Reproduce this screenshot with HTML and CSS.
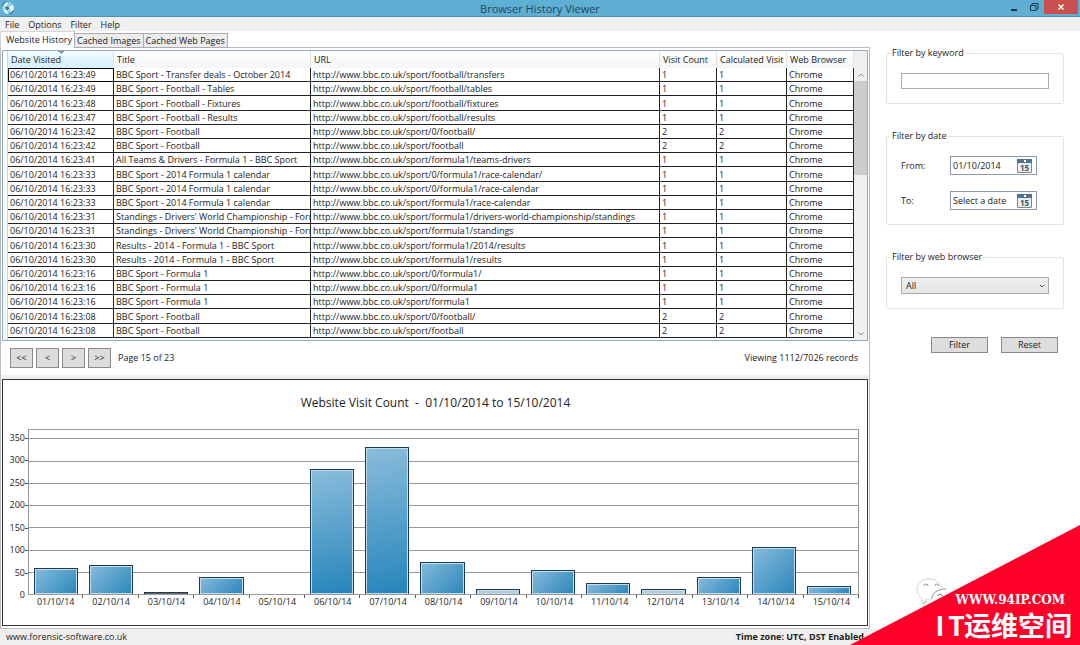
FILE: index.html
```
<!DOCTYPE html>
<html lang="en">
<head>
  <meta charset="UTF-8">
  <meta name="viewport" content="width=device-width, initial-scale=1.0">
  <title>Browser History Viewer</title>
  <link rel="stylesheet" href="styles.css">
</head>
<body>
  <header class="titlebar">
    <svg class="app-icon" viewBox="0 0 14 14">
      <circle cx="7" cy="7" r="6" fill="#8fd0ee"/>
      <path d="M3 3l3-2 1 2-2 2-2 1zM8 6l4-2 1 4-2 3-2-2zM3 8l3 1 1 4-3-1z" fill="#e8f6fc"/>
      <path d="M1 5a6 6 0 0 1 4-4M13 9a6 6 0 0 1-5 4M5 6l3 1-2 2z" stroke="#38627a" fill="#38627a" fill-opacity=".5"/>
    </svg>
    <h1>Browser History Viewer</h1>
    <div class="window-buttons">
      <button class="win-btn" aria-label="Minimize"><svg viewBox="0 0 10 10"><path d="M2 8h6" stroke="#17384c" stroke-width="2"/></svg></button>
      <button class="win-btn" aria-label="Restore"><svg viewBox="0 0 10 10"><path d="M3 3V1.500h6V7H7.500M1.500 3.500h5.500v5H1.500z" stroke="#17384c" fill="none"/></svg></button>
      <button class="win-btn close" aria-label="Close"><svg viewBox="0 0 10 10"><path d="M2.500 2.500l5 5M7.500 2.500l-5 5" stroke="#fff" stroke-width="1.500"/></svg></button>
    </div>
  </header>

  <nav class="menu">
    <a href="#">File</a>
    <a href="#">Options</a>
    <a href="#">Filter</a>
    <a href="#">Help</a>
  </nav>

  <main class="main">
    <section class="left">
      <div class="tabs">
        <button class="tab active">Website History</button>
        <button class="tab">Cached Images</button>
        <button class="tab">Cached Web Pages</button>
      </div>

      <div class="tab-page">
        <div class="grid">
          <div class="row-header"></div>
          <table>
            <colgroup>
              <col class="col-date"><col class="col-title"><col><col class="col-count"><col class="col-calc"><col class="col-browser">
            </colgroup>
            <thead>
              <tr><th class="sorted">Date Visited</th><th>Title</th><th>URL</th><th>Visit Count</th><th>Calculated Visit</th><th>Web Browser</th></tr>
            </thead>
            <tbody>
              <tr><td class="current">06/10/2014 16:23:49</td><td>BBC Sport - Transfer deals - October 2014</td><td>http://www.bbc.co.uk/sport/football/transfers</td><td>1</td><td>1</td><td>Chrome</td></tr>
              <tr><td>06/10/2014 16:23:49</td><td>BBC Sport - Football - Tables</td><td>http://www.bbc.co.uk/sport/football/tables</td><td>1</td><td>1</td><td>Chrome</td></tr>
              <tr><td>06/10/2014 16:23:48</td><td>BBC Sport - Football - Fixtures</td><td>http://www.bbc.co.uk/sport/football/fixtures</td><td>1</td><td>1</td><td>Chrome</td></tr>
              <tr><td>06/10/2014 16:23:47</td><td>BBC Sport - Football - Results</td><td>http://www.bbc.co.uk/sport/football/results</td><td>1</td><td>1</td><td>Chrome</td></tr>
              <tr><td>06/10/2014 16:23:42</td><td>BBC Sport - Football</td><td>http://www.bbc.co.uk/sport/0/football/</td><td>2</td><td>2</td><td>Chrome</td></tr>
              <tr><td>06/10/2014 16:23:42</td><td>BBC Sport - Football</td><td>http://www.bbc.co.uk/sport/football</td><td>2</td><td>2</td><td>Chrome</td></tr>
              <tr><td>06/10/2014 16:23:41</td><td>All Teams &amp; Drivers - Formula 1 - BBC Sport</td><td>http://www.bbc.co.uk/sport/formula1/teams-drivers</td><td>1</td><td>1</td><td>Chrome</td></tr>
              <tr><td>06/10/2014 16:23:33</td><td>BBC Sport - 2014 Formula 1 calendar</td><td>http://www.bbc.co.uk/sport/0/formula1/race-calendar/</td><td>1</td><td>1</td><td>Chrome</td></tr>
              <tr><td>06/10/2014 16:23:33</td><td>BBC Sport - 2014 Formula 1 calendar</td><td>http://www.bbc.co.uk/sport/0/formula1/race-calendar</td><td>1</td><td>1</td><td>Chrome</td></tr>
              <tr><td>06/10/2014 16:23:33</td><td>BBC Sport - 2014 Formula 1 calendar</td><td>http://www.bbc.co.uk/sport/formula1/race-calendar</td><td>1</td><td>1</td><td>Chrome</td></tr>
              <tr><td>06/10/2014 16:23:31</td><td>Standings - Drivers' World Championship - Form</td><td>http://www.bbc.co.uk/sport/formula1/drivers-world-championship/standings</td><td>1</td><td>1</td><td>Chrome</td></tr>
              <tr><td>06/10/2014 16:23:31</td><td>Standings - Drivers' World Championship - Form</td><td>http://www.bbc.co.uk/sport/formula1/standings</td><td>1</td><td>1</td><td>Chrome</td></tr>
              <tr><td>06/10/2014 16:23:30</td><td>Results - 2014 - Formula 1 - BBC Sport</td><td>http://www.bbc.co.uk/sport/formula1/2014/results</td><td>1</td><td>1</td><td>Chrome</td></tr>
              <tr><td>06/10/2014 16:23:30</td><td>Results - 2014 - Formula 1 - BBC Sport</td><td>http://www.bbc.co.uk/sport/formula1/results</td><td>1</td><td>1</td><td>Chrome</td></tr>
              <tr><td>06/10/2014 16:23:16</td><td>BBC Sport - Formula 1</td><td>http://www.bbc.co.uk/sport/0/formula1/</td><td>1</td><td>1</td><td>Chrome</td></tr>
              <tr><td>06/10/2014 16:23:16</td><td>BBC Sport - Formula 1</td><td>http://www.bbc.co.uk/sport/0/formula1</td><td>1</td><td>1</td><td>Chrome</td></tr>
              <tr><td>06/10/2014 16:23:16</td><td>BBC Sport - Formula 1</td><td>http://www.bbc.co.uk/sport/formula1</td><td>1</td><td>1</td><td>Chrome</td></tr>
              <tr><td>06/10/2014 16:23:08</td><td>BBC Sport - Football</td><td>http://www.bbc.co.uk/sport/0/football/</td><td>2</td><td>2</td><td>Chrome</td></tr>
              <tr><td>06/10/2014 16:23:08</td><td>BBC Sport - Football</td><td>http://www.bbc.co.uk/sport/football</td><td>2</td><td>2</td><td>Chrome</td></tr>
            </tbody>
          </table>
          <div class="scrollbar">
            <svg class="arrow" viewBox="0 0 8 6"><path d="M1.500 4.500L4 2l2.500 2.500" fill="none" stroke="#8a8a8a"/></svg>
            <div class="thumb"></div>
            <svg class="arrow" viewBox="0 0 8 6"><path d="M1.500 1.500L4 4l2.500-2.500" fill="none" stroke="#8a8a8a"/></svg>
          </div>
        </div>

        <div class="pager">
          <button>&lt;&lt;</button>
          <button>&lt;</button>
          <button>&gt;</button>
          <button>&gt;&gt;</button>
          <span>Page 15 of 23</span>
          <span class="records">Viewing 1112/7026 records</span>
        </div>

        <div class="splitter"></div>

        <div class="chart">
          <h2>Website Visit Count &nbsp;-&nbsp; 01/10/2014 to 15/10/2014</h2>
          <div class="chart-body">
            <div class="y-axis">
              <i class="top"></i>
              <div><span>350</span></div>
              <div><span>300</span></div>
              <div><span>250</span></div>
              <div><span>200</span></div>
              <div><span>150</span></div>
              <div><span>100</span></div>
              <div><span>50</span></div>
              <b>0</b>
            </div>
            <div class="plot">
              <div class="lines"><i class="top"></i><i></i><i></i><i></i><i></i><i></i><i></i><i></i></div>
              <div class="bars">
                <div><span class="bar" style="height: 15.7%"></span></div>
                <div><span class="bar" style="height: 17.8%"></span></div>
                <div><span class="bar thin" style="height: 1.2%"></span></div>
                <div><span class="bar" style="height: 10.3%"></span></div>
                <div></div>
                <div><span class="bar tall" style="height: 76.2%"></span></div>
                <div><span class="bar tall" style="height: 89.5%"></span></div>
                <div><span class="bar" style="height: 19.7%"></span></div>
                <div><span class="bar pale" style="height: 3%"></span></div>
                <div><span class="bar" style="height: 14.6%"></span></div>
                <div><span class="bar" style="height: 7%"></span></div>
                <div><span class="bar pale" style="height: 3.3%"></span></div>
                <div><span class="bar" style="height: 10.6%"></span></div>
                <div><span class="bar" style="height: 28.8%"></span></div>
                <div><span class="bar" style="height: 5%"></span></div>
              </div>
            </div>
            <div class="x-axis">
              <span>01/10/14</span><span>02/10/14</span><span>03/10/14</span><span>04/10/14</span><span>05/10/14</span><span>06/10/14</span><span>07/10/14</span><span>08/10/14</span><span>09/10/14</span><span>10/10/14</span><span>11/10/14</span><span>12/10/14</span><span>13/10/14</span><span>14/10/14</span><span>15/10/14</span>
            </div>
          </div>
        </div>
      </div>
    </section>

    <form class="filters">
      <fieldset>
        <legend><label for="keyword">Filter by keyword</label></legend>
        <input class="keyword" id="keyword" type="text">
      </fieldset>

      <fieldset>
        <legend>Filter by date</legend>
        <div class="date-row">
          <label for="from">From:</label>
          <div class="date-box">
            <input id="from" type="text" value="01/10/2014">
            <button type="button" aria-label="Choose start date"><svg viewBox="0 0 15 14"><path d="M.5.5h14v13H.5z" fill="#e9eef2" stroke="#7d8a96"/><path d="M0 0h15v4H0z" fill="#4d7391"/><path d="M7 1h2v2H7z" fill="#fff"/><text x="7.500" y="12" text-anchor="middle">15</text></svg></button>
          </div>
        </div>
        <div class="date-row">
          <label for="to">To:</label>
          <div class="date-box">
            <input id="to" type="text" value="Select a date">
            <button type="button" aria-label="Choose end date"><svg viewBox="0 0 15 14"><path d="M.5.5h14v13H.5z" fill="#e9eef2" stroke="#7d8a96"/><path d="M0 0h15v4H0z" fill="#4d7391"/><path d="M7 1h2v2H7z" fill="#fff"/><text x="7.500" y="12" text-anchor="middle">15</text></svg></button>
          </div>
        </div>
      </fieldset>

      <fieldset>
        <legend><label for="browser">Filter by web browser</label></legend>
        <div class="select-box">
          <select id="browser"><option>All</option></select>
          <svg class="arrow" viewBox="0 0 8 6"><path d="M2 2l2 2 2-2" fill="none" stroke="#555"/></svg>
        </div>
      </fieldset>

      <div class="actions">
        <button type="button">Filter</button>
        <button type="button">Reset</button>
      </div>
    </form>
  </main>

  <footer class="statusbar">
    <span>www.forensic-software.co.uk</span>
    <strong>Time zone: UTC, DST Enabled</strong>
  </footer>

  <svg class="chat-icon" viewBox="0 0 32 32">
    <path d="M13 2C6 2 1 7 1 12c0 4 2 7 5 9l-1 4 5-3c2 1 4 1 6 0M13 2c7 0 12 4 13 9" fill="none" stroke="#c4c4c4" stroke-width=".7"/>
    <path d="M8 9a2 2 0 0 1 4 0M19 9a2 2 0 0 1 4 0M16 22c0-6 5-10 14-10M6 27l5-3" fill="none" stroke="#777" stroke-width=".8"/>
    <path d="M22 19a2 2 0 0 1 4 0" fill="none" stroke="#777"/>
  </svg>
  <div class="corner">
    <p class="site">WWW.94IP.COM</p>
    <p class="name"><span>I</span><span>T</span><span>运</span><span>维</span><span>空</span><span>间</span></p>
  </div>
</body>
</html>
```
FILE: styles.css
```
* {
  box-sizing: border-box;
}

body {
  margin: 0;
  height: 100vh;
  display: flex;
  flex-direction: column;
  overflow: hidden;
  background: #fff;
  color: #222;
  font-family: "Open Sans", "Noto Sans", sans-serif;
  font-size: 9px;
  line-height: 12px;
}

button,
input,
select {
  font: inherit;
  color: inherit;
  margin: 0;
  padding: 0;
}

h1,
h2,
p {
  margin: 0;
  font-weight: normal;
}

.titlebar {
  display: grid;
  grid-template-columns: 1fr auto 1fr;
  height: 17px;
  background: #5fafd5;
  border-bottom: 1px solid #548fac;
}

.app-icon {
  width: 14px;
  height: 14px;
  margin: 1px;
}

.titlebar h1 {
  font-size: 11px;
  line-height: 17px;
  color: #20475c;
}

.window-buttons {
  display: flex;
  justify-content: flex-end;
  padding-right: 2px;
}

.win-btn {
  width: 20px;
  height: 14px;
  border: 0;
  background: none;
}

.win-btn svg {
  display: block;
  width: 10px;
  height: 10px;
  margin: 2px auto;
}

.win-btn.close {
  width: 34px;
  background: #c9504f;
}

.menu {
  display: flex;
  gap: 9px;
  height: 14px;
  padding: 2px 5px 0;
  background: #f0f0f0;
}

.menu a {
  color: inherit;
  text-decoration: none;
}

.main {
  flex: 1;
  min-height: 0;
  display: flex;
}

.left {
  flex: 1;
  min-width: 0;
  display: flex;
  flex-direction: column;
}

.tabs {
  display: flex;
  align-items: flex-end;
  height: 17px;
  margin-bottom: -1px;
  z-index: 1;
}

.tab {
  height: 15px;
  padding: 0 2px;
  border: 1px solid #acacac;
  border-left-width: 0;
  background: #ececec;
}

.tab.active {
  height: 17px;
  padding: 0 2px 1px 5px;
  border-left-width: 1px;
  border-bottom: 0;
  border-color: #d5d5d5 #acacac #d5d5d5 #d5d5d5;
  background: #fff;
}

.tab-page {
  flex: 1;
  min-height: 0;
  display: flex;
  flex-direction: column;
  padding: 2px 1px;
  border: 1px solid #b8bcc2;
}

.grid {
  display: flex;
  height: 291px;
  border: 1px solid #93a9bd;
  background: #fff;
}

.row-header {
  width: 5px;
  background: linear-gradient(#fff, #f1f5f8);
  border-right: 1px solid #c9d6df;
}

.grid table {
  flex: 1;
  width: 0;
  height: 287px;
  table-layout: fixed;
  border-collapse: separate;
  border-spacing: 0;
}

.col-date { width: 106px; }
.col-title { width: 197px; }
.col-count { width: 57px; }
.col-calc { width: 70px; }
.col-browser { width: 67px; }

.grid th,
.grid td {
  padding: 1px 0 0 2px;
  overflow: hidden;
  white-space: nowrap;
  text-align: left;
  font-weight: normal;
}

.grid th {
  height: 17px;
  padding: 0 0 0 3px;
  background: linear-gradient(#fff, #f3f5f7);
  border-right: 1px solid #dfe3e8;
}

.grid th.sorted {
  background-image: conic-gradient(from -45deg at 50% 3px, #7d9bad 90deg, transparent 0), linear-gradient(#f2fbff, #d3eefb);
  background-size: 6px 3px, auto;
  background-position: top center, 0 0;
  background-repeat: no-repeat;
}

.grid td {
  border-right: 1px solid #222;
  border-bottom: 1px solid #222;
}

.grid td.current {
  outline: 1px solid #000;
  outline-offset: -1px;
}

.scrollbar {
  display: flex;
  flex-direction: column;
  align-items: center;
  width: 13px;
  padding-top: 21px;
  background: #f0f0f0;
}

.arrow {
  flex: none;
  width: 8px;
  height: 6px;
}

.scrollbar .thumb {
  flex: none;
  width: 13px;
  height: 94px;
  margin: 3px 0 auto;
  background: #cdcdcd;
}

.scrollbar .arrow:last-child {
  margin-bottom: 3px;
}

.pager {
  display: flex;
  align-items: center;
  gap: 3px;
  height: 34px;
  padding: 0 10px 0 8px;
}

.pager button {
  width: 23px;
  height: 20px;
  border: 1px solid #8a8a8a;
  background: #ddd;
}

.pager button + span {
  margin-left: 4px;
}

.records {
  margin-left: auto;
}

.splitter {
  height: 4px;
  background: #f0f0f0;
}

.chart {
  flex: 1;
  min-height: 0;
  display: flex;
  flex-direction: column;
  padding: 15px 8px 14px 0;
  border: 1px solid #333;
}

.chart h2 {
  font-size: 12px;
  line-height: 16px;
  text-align: center;
  padding-left: 9px;
}

.chart-body {
  flex: 1;
  min-height: 0;
  display: grid;
  grid-template-columns: 25px 1fr;
  grid-template-rows: 1fr 16px;
  padding-top: 18px;
}

.y-axis,
.lines {
  display: flex;
  flex-direction: column;
}

.y-axis {
  text-align: right;
}

.y-axis div,
.lines i {
  flex: 50 0 0;
  min-height: 0;
}

.y-axis .top,
.lines .top {
  flex-grow: 20;
}

.y-axis div {
  background: linear-gradient(#555, #555) top right / 3px 1px no-repeat;
}

.y-axis span,
.y-axis b {
  display: block;
  height: 12px;
  margin: -6px 3px -6px 0;
  font-weight: normal;
}

.plot {
  position: relative;
  border: 1px solid #999;
}

.lines {
  position: absolute;
  inset: 0;
}

.lines i + i {
  border-top: 1px solid #999;
}

.bars {
  position: relative;
  display: flex;
  height: 100%;
}

.bars div {
  flex: 1;
  display: flex;
  align-items: flex-end;
  justify-content: center;
  padding-right: 2px;
}

.bar {
  width: 83%;
  border: 1px solid #1d3b50;
  border-bottom-width: 0;
  box-shadow: inset 0 0 0 1px #c3dcea;
  background: linear-gradient(135deg, #86bbdb, #2b86bb);
}

.bar.tall {
  background: linear-gradient(170deg, #8abcdb, #2585bb);
}

.bar.pale {
  background: #b4cbd9;
}

.bar.thin {
  background: #666;
  box-shadow: none;
}

.x-axis {
  grid-column: 2;
  display: flex;
}

.x-axis span {
  flex: 1;
  padding-top: 1px;
  text-align: center;
  background: linear-gradient(#555, #555) top right / 1px 3px no-repeat;
}

.filters {
  width: 210px;
  padding: 16px 16px 0;
}

.filters fieldset {
  margin: 0 0 26px;
  padding: 14px;
  border: 1px solid #e3e3e3;
  border-radius: 2px;
}

.filters legend {
  margin-left: -10px;
  padding: 0 1px;
}

.filters .keyword {
  display: block;
  width: 100%;
  height: 16px;
  border: 1px solid #ababab;
}

.date-row {
  display: flex;
  align-items: center;
  justify-content: space-between;
}

.date-row + .date-row {
  margin-top: 16px;
}

.date-box {
  display: flex;
  align-items: center;
  width: 87px;
  height: 19px;
  margin-right: 12px;
  border: 1px solid #8d9aa8;
}

.date-box input {
  flex: 1;
  width: 0;
  padding-left: 2px;
  border: 0;
  outline: 0;
}

.date-box button {
  width: 15px;
  height: 14px;
  margin-right: 4px;
  border: 0;
  background: none;
}

.date-box svg {
  display: block;
  width: 15px;
  height: 14px;
}

.date-box text {
  font-size: 8px;
  font-weight: bold;
  fill: #49555f;
}

.select-box {
  display: flex;
  align-items: center;
}

.select-box select {
  flex: 1;
  height: 17px;
  padding-left: 4px;
  border: 1px solid #acacac;
  border-radius: 0;
  appearance: none;
  background: linear-gradient(#f0f0f0, #e5e5e5);
}

.select-box .arrow {
  margin-left: -11px;
  margin-right: 3px;
  pointer-events: none;
}

.actions {
  display: flex;
  justify-content: flex-end;
  gap: 13px;
  padding: 2px 6px 0 0;
}

.actions button {
  width: 57px;
  height: 16px;
  border: 1px solid #8a8a8a;
  background: #ddd;
}

.statusbar {
  display: flex;
  justify-content: space-between;
  height: 16px;
  padding: 2px 216px 0 6px;
  background: #f0eeee;
}

.chat-icon {
  position: fixed;
  right: 132px;
  bottom: 36px;
  width: 32px;
  height: 32px;
}

.corner {
  position: fixed;
  right: 0;
  bottom: 0;
  width: 230px;
  height: 120px;
  padding: 66px 8px 0 0;
  background: #ff0029;
  clip-path: polygon(100% 0, 100% 100%, 0 100%);
  color: #fff;
  text-align: right;
}

.corner .site {
  padding-right: 7px;
  font-family: "DejaVu Serif", serif;
  font-weight: bold;
  font-size: 12px;
  line-height: 18px;
}

.corner .name {
  display: flex;
  justify-content: flex-end;
  font-family: "Noto Sans CJK SC", sans-serif;
  font-weight: bold;
  font-size: 27px;
  line-height: 32px;
}

.corner .name span:nth-child(-n+2) {
  width: 16px;
  text-align: center;
}
```
